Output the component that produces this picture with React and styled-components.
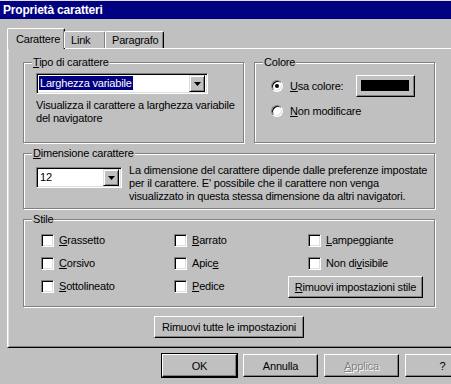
import React from "react";
import styled, { createGlobalStyle } from "styled-components";

const GlobalStyle = createGlobalStyle`
  html, body {
    margin: 0;
    padding: 0;
    background: #c0c0c0;
    overflow: hidden;
  }
  body {
    font-family: "Liberation Sans", Arial, sans-serif;
    font-size: 11px;
    letter-spacing: -0.2px;
    color: #000;
  }
`

const Dialog = styled.div`
  width: 487px;
  height: 384px;
  border-top: 1px solid #dfdfdf;
  box-sizing: border-box;
  background: #c0c0c0;
`

const TitleBar = styled.div`
  height: 18px;
  background: #000080;
  color: #fff;
  font-weight: bold;
  font-size: 12px;
  line-height: 18px;
  padding-left: 3px;
`

const Body = styled.div`
  padding: 9px 7px 0 7px;
`

const TabRow = styled.div`
  display: flex;
  align-items: flex-end;
  height: 20px;
  position: relative;
  z-index: 1;
`

const Tab = styled.div`
  box-sizing: border-box;
  height: ${(p) => (p.active ? "21px" : "17px")};
  margin-bottom: ${(p) => (p.active ? "-1px" : "0")};
  margin-left: ${(p) => (p.active ? "0" : "-1px")};
  padding: ${(p) => (p.active ? "4px 0 0 8px" : "2px 0 0 6px")};
  width: ${(p) => p.w}px;
  background: #c0c0c0;
  border-top: 1px solid #fff;
  border-left: 1px solid #fff;
  border-right: 1px solid #000;
  border-radius: 2px 2px 0 0;
  box-shadow: inset -1px 0 0 #808080;
  line-height: 13px;
  white-space: nowrap;
`

const Panel = styled.div`
  box-sizing: border-box;
  width: 473px;
  height: 300px;
  border-top: 1px solid #fff;
  border-left: 1px solid #fff;
  border-bottom: 1px solid #000;
  box-shadow: inset 1px 0 0 #dfdfdf, inset 0 -1px 0 #808080;
  padding: 7px 0 0 15px;
`

const Column = styled.div`
  width: 412px;
  display: flex;
  flex-direction: column;
`

const TopRow = styled.div`
  display: flex;
  justify-content: space-between;
`

const Group = styled.fieldset`
  box-sizing: border-box;
  margin: ${(p) => p.mt || 0}px 0 0 0;
  width: ${(p) => p.w}px;
  height: ${(p) => p.h}px;
  padding: 0;
  border: 1px solid #808080;
  box-shadow: inset 1px 1px 0 #fff, 1px 1px 0 #fff;
  min-width: 0;
  white-space: nowrap;
`

const Legend = styled.legend`
  padding: 0 1px;
  margin-left: 8px;
  background: #c0c0c0;
  line-height: 13px;
`

const GroupBody = styled.div`
  padding: ${(p) => p.pad};
`

const Combo = styled.div`
  box-sizing: border-box;
  flex: none;
  width: ${(p) => p.w}px;
  height: 21px;
  border-top: 1px solid #808080;
  border-left: 1px solid #808080;
  border-right: 1px solid #fff;
  border-bottom: 1px solid #fff;
  box-shadow: inset 1px 1px 0 #000, inset -1px -1px 0 #dfdfdf;
  background: #fff;
  display: flex;
  align-items: center;
  padding: 2px;
`

const ComboText = styled.div`
  flex: 1;
  padding-left: ${(p) => p.pl || 0}px;
  line-height: 15px;
`

const Selected = styled.span`
  background: #000080;
  color: #fff;
  padding: 1px;
`

const ArrowButton = styled.div`
  box-sizing: border-box;
  width: 16px;
  height: 17px;
  background: #c0c0c0;
  border-top: 1px solid #dfdfdf;
  border-left: 1px solid #dfdfdf;
  border-right: 1px solid #000;
  border-bottom: 1px solid #000;
  box-shadow: inset 1px 1px 0 #fff, inset -1px -1px 0 #808080;
  display: flex;
  align-items: center;
  justify-content: center;
`

const Hint = styled.div`
  line-height: 13px;
  margin-top: ${(p) => p.mt || 0}px;
  white-space: nowrap;
`

const RadioRow = styled.div`
  display: flex;
  align-items: center;
  gap: 7px;
  height: ${(p) => p.h || 24}px;
`

const RadioDot = styled.span`
  box-sizing: border-box;
  flex: none;
  width: 12px;
  height: 12px;
  border-radius: 50%;
  border: 1px solid;
  border-color: #808080 #fff #fff #808080;
  background: #fff;
  box-shadow: inset 1px 1px 0 #000, inset -1px -1px 0 #dfdfdf;
  display: flex;
  align-items: center;
  justify-content: center;
  &::after {
    content: "";
    width: 4px;
    height: 4px;
    border-radius: 50%;
    background: ${(p) => (p.checked ? "#000" : "transparent")};
  }
`

const ColorButton = styled.div`
  box-sizing: border-box;
  flex: none;
  width: 59px;
  height: 22px;
  margin-left: auto;
  margin-right: 19px;
  border-top: 1px solid #fff;
  border-left: 1px solid #fff;
  border-right: 1px solid #000;
  border-bottom: 1px solid #000;
  box-shadow: inset -1px -1px 0 #808080;
  padding: 4px 5px 5px 4px;
`

const Swatch = styled.div`
  height: 100%;
  background: #000;
`

const SizeRow = styled.div`
  display: flex;
  gap: 7px;
  align-items: flex-start;
`

const CheckGrid = styled.div`
  width: 382px;
  display: grid;
  grid-template-columns: 133px 134px minmax(0, 1fr);
  grid-auto-rows: 23px;
  margin-top: 1px;
`

const CheckItem = styled.div`
  display: flex;
  align-items: flex-start;
  gap: 5px;
  line-height: 13px;
`

const EndCell = styled.div`
  display: flex;
  justify-content: flex-end;
  min-width: 0;
  margin-top: -4px;
`

const Box = styled.span`
  box-sizing: border-box;
  flex: none;
  width: 13px;
  height: 13px;
  background: #fff;
  border-top: 1px solid #808080;
  border-left: 1px solid #808080;
  border-right: 1px solid #fff;
  border-bottom: 1px solid #fff;
  box-shadow: inset 1px 1px 0 #000, inset -1px -1px 0 #dfdfdf;
`

const Button = styled.div`
  box-sizing: border-box;
  flex: none;
  width: ${(p) => p.w}px;
  height: ${(p) => p.h || 23}px;
  background: #c0c0c0;
  border-top: 1px solid #fff;
  border-left: 1px solid #fff;
  border-right: 1px solid #000;
  border-bottom: 1px solid #000;
  box-shadow: ${(p) =>
    p.isDefault
      ? "inset -1px -1px 0 #808080, 0 0 0 1px #000"
      : "inset -1px -1px 0 #808080"};
  display: flex;
  align-items: center;
  justify-content: center;
  white-space: nowrap;
  color: ${(p) => (p.disabled ? "#808080" : "#000")};
  text-shadow: ${(p) => (p.disabled ? "1px 1px 0 #fff" : "none")};
`

const CenterRow = styled.div`
  display: flex;
  justify-content: center;
  margin-top: 9px;
`

const Footer = styled.div`
  display: flex;
  justify-content: flex-end;
  gap: 6px;
  margin-top: 6px;
`

const Arrow = () => (
  <svg width="7" height="4" viewBox="0 0 7 4">
    <path d="M0 0h7L3.5 4z" fill="#000" />
  </svg>
)

const Check = ({ children }) => (
  <CheckItem>
    <Box />
    <span>{children}</span>
  </CheckItem>
)

const App = () => {
  return (
    <Dialog>
      <GlobalStyle />
      <TitleBar>Proprietà caratteri</TitleBar>
      <Body>
        <TabRow>
          <Tab active w={58}>Carattere</Tab>
          <Tab w={42}>Link</Tab>
          <Tab w={59}>Paragrafo</Tab>
        </TabRow>
        <Panel>
          <Column>
            <TopRow>
              <Group w={221} h={87}>
                <Legend><u>T</u>ipo di carattere</Legend>
                <GroupBody pad="4px 0 0 12px">
                  <Combo w={172}>
                    <ComboText><Selected>Larghezza variabile</Selected></ComboText>
                    <ArrowButton><Arrow /></ArrowButton>
                  </Combo>
                  <Hint mt={5}>
                    Visualizza il carattere a larghezza variabile<br />del navigatore
                  </Hint>
                </GroupBody>
              </Group>
              <Group w={181} h={87}>
                <Legend>Colore</Legend>
                <GroupBody pad="4px 0 0 16px">
                  <RadioRow h={25}>
                    <RadioDot checked />
                    <span><u>U</u>sa colore:</span>
                    <ColorButton><Swatch /></ColorButton>
                  </RadioRow>
                  <RadioRow h={26}>
                    <RadioDot />
                    <span><u>N</u>on modificare</span>
                  </RadioRow>
                </GroupBody>
              </Group>
            </TopRow>
            <Group w={412} h={62} mt={4}>
              <Legend><u>D</u>imensione carattere</Legend>
              <GroupBody pad="7px 0 0 12px">
                <SizeRow>
                  <Combo w={86}>
                    <ComboText pl={1}>12</ComboText>
                    <ArrowButton><Arrow /></ArrowButton>
                  </Combo>
                  <Hint mt={-3}>
                    La dimensione del carattere dipende dalle preferenze impostate<br />
                    per il carattere. E' possibile che il carattere non venga<br />
                    visualizzato in questa stessa dimensione da altri navigatori.
                  </Hint>
                </SizeRow>
              </GroupBody>
            </Group>
            <Group w={412} h={94} mt={4}>
              <Legend>Stile</Legend>
              <GroupBody pad="7px 0 0 17px">
                <CheckGrid>
                  <Check><u>G</u>rassetto</Check>
                  <Check><u>B</u>arrato</Check>
                  <Check><u>L</u>ampeggiante</Check>
                  <Check><u>C</u>orsivo</Check>
                  <Check>Apic<u>e</u></Check>
                  <Check>Non di<u>v</u>isibile</Check>
                  <Check><u>S</u>ottolineato</Check>
                  <Check><u>P</u>edice</Check>
                  <EndCell>
                    <Button w={135} h={22}><span><u>R</u>imuovi impostazioni stile</span></Button>
                  </EndCell>
                </CheckGrid>
              </GroupBody>
            </Group>
            <CenterRow>
              <Button w={150} h={22}><span>Rimuovi tutte le impostazioni</span></Button>
            </CenterRow>
          </Column>
        </Panel>
        <Footer>
          <Button w={75} isDefault>OK</Button>
          <Button w={75}>Annulla</Button>
          <Button w={75} disabled><span><u>A</u>pplica</span></Button>
          <Button w={75}>?</Button>
        </Footer>
      </Body>
    </Dialog>
  )
}

export default App;
